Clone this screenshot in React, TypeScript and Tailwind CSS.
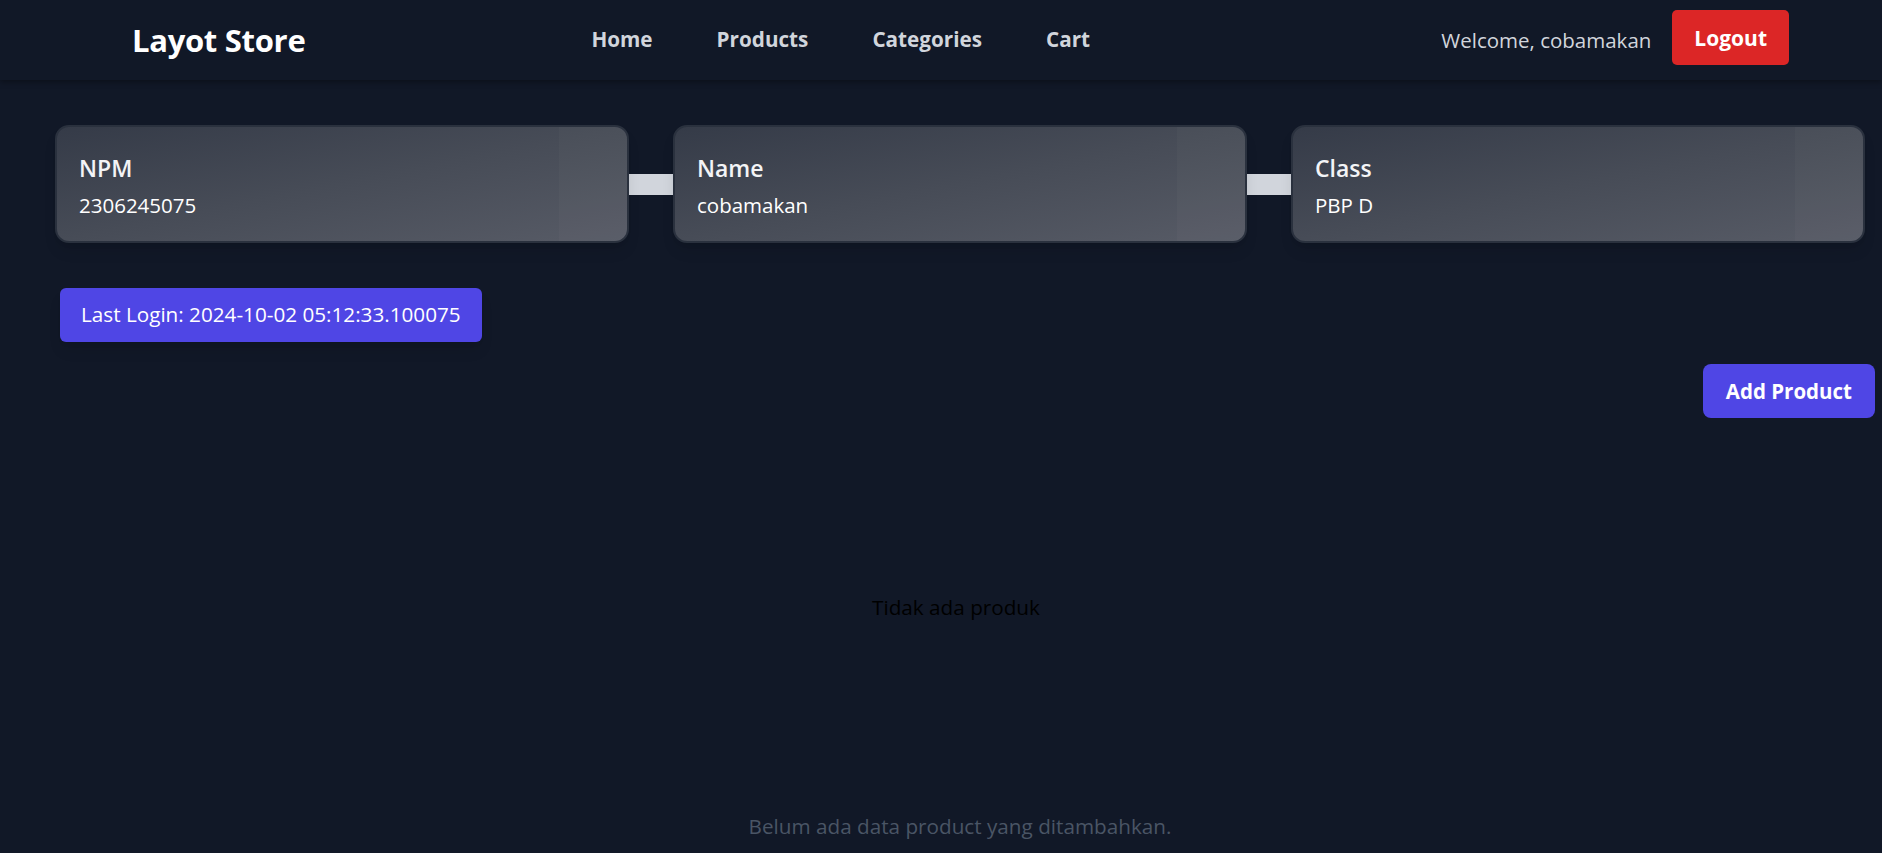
import React from "react";

function InfoCard({ label, value }: { label: string; value: string }) {
  return (
    <div className="relative w-[574px] h-[118px] shrink-0 rounded-[14px] border-2 border-[#2a313e] bg-gradient-to-br from-[#353b48] via-[#474c57] to-[#575b66] overflow-hidden shadow-lg">
      <div className="absolute right-0 top-0 h-full w-[68px] bg-white/[0.025]" />
      <div className="relative px-[22px] pt-[26px]">
        <div className="text-[23px] leading-[30px] font-semibold text-gray-100">{label}</div>
        <div className="mt-[8px] text-[20.5px] leading-[28px] text-white">{value}</div>
      </div>
    </div>
  );
}

function Connector() {
  return <div className="w-[44px] h-[21px] shrink-0 bg-gray-300" />;
}

export default function App() {
  return (
    <div className="w-[1882px] h-[853px] overflow-hidden bg-[#111827] font-['Open_Sans',sans-serif]">
      <nav className="relative z-10 h-[80px] flex items-center pl-[132px] pr-[93px] bg-[#111827] shadow-[0_2px_6px_rgba(0,0,0,0.35)]">
        <span className="text-[31px] font-bold text-white tracking-[-0.3px]">Layot Store</span>
        <div className="ml-[286px] flex gap-[64px] text-[20.7px] font-bold text-gray-300">
          <a>Home</a>
          <a>Products</a>
          <a>Categories</a>
          <a>Cart</a>
        </div>
        <div className="ml-auto flex items-center gap-[21px]">
          <span className="text-[20.5px] text-gray-300">Welcome, cobamakan</span>
          <button className="mb-[6px] h-[55px] px-[22px] rounded-[5px] bg-[#dc2626] text-[21px] font-bold text-white">
            <span className="relative top-[2px]">Logout</span>
          </button>
        </div>
      </nav>

      <main className="pl-[55px] pr-[7px]">
        <div className="mt-[45px] flex items-center w-[1810px]">
          <InfoCard label="NPM" value="2306245075" />
          <Connector />
          <InfoCard label="Name" value="cobamakan" />
          <Connector />
          <InfoCard label="Class" value="PBP D" />
        </div>

        <div className="mt-[45px] ml-[5px]">
          <div className="inline-flex items-center h-[54px] px-[21px] rounded-[6px] bg-[#4f46e5] text-[20.7px] text-white shadow-lg">
            Last Login: 2024-10-02 05:12:33.100075
          </div>
        </div>

        <div className="mt-[22px] flex justify-end">
          <button className="h-[54px] px-[23px] rounded-[8px] bg-[#4f46e5] text-[20.5px] font-bold text-white">
            Add Product
          </button>
        </div>

        <div className="w-[1802px] mt-[176px] text-center text-[20.7px] leading-[26px] text-black">
          Tidak ada produk
        </div>

        <div className="w-[1810px] mt-[193px] text-center text-[20.7px] leading-[26px] text-gray-600">
          Belum ada data product yang ditambahkan.
        </div>
      </main>
    </div>
  );
}
